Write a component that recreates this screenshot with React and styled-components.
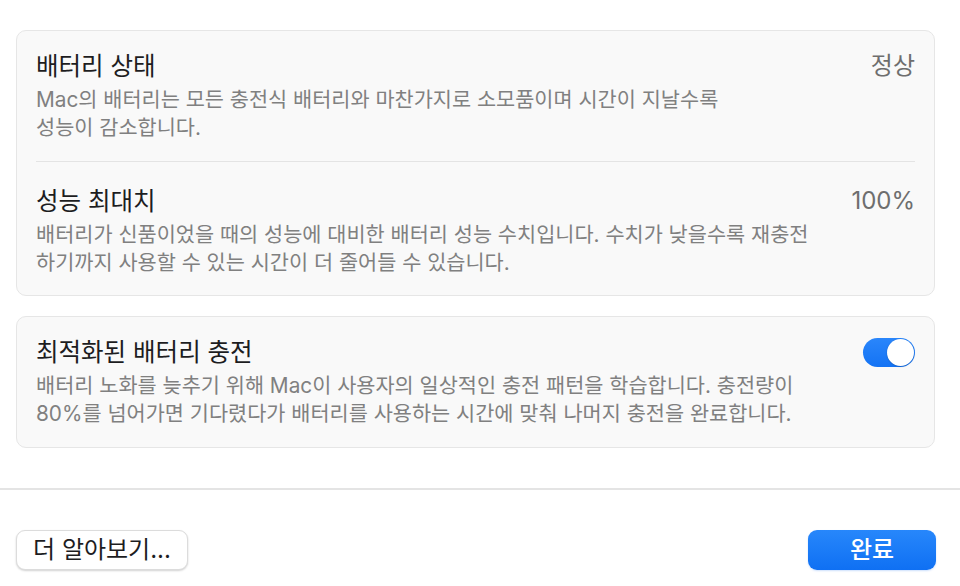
import React from 'react';
import styled, { createGlobalStyle } from 'styled-components';

const GlobalStyle = createGlobalStyle`
  html, body {
    margin: 0;
    padding: 0;
    background: #ffffff;
  }
  body {
    font-family: Inter, "Noto Sans CJK KR", sans-serif;
    -webkit-font-smoothing: antialiased;
  }
`;

const Sheet = styled.div`
  width: 960px;
  height: 586px;
  box-sizing: border-box;
  display: flex;
  flex-direction: column;
  background: #ffffff;
  padding-top: 30px;
`;

const Content = styled.div`
  display: flex;
  flex-direction: column;
  gap: 20px;
  padding: 0 25px 0 16px;
`;

const Card = styled.section`
  background: #f9f9f9;
  border: 1px solid #e6e6e6;
  border-radius: 10px;
  padding: 0 19px;
`;

const Row = styled.div`
  display: flex;
  align-items: flex-start;
  gap: 20px;
  padding: ${(p) => (p.$tight ? '24px 0 18px' : '20px 0 19px')};

  & + & {
    border-top: 1px solid #e4e4e4;
  }
`;

const Text = styled.div`
  flex: 1;
  min-width: 0;
`;

const Title = styled.h3`
  margin: 0 0 5px;
  font-size: 24.5px;
  font-weight: 400;
  line-height: 30px;
  color: #1d1d1f;
`;

const Desc = styled.p`
  margin: 0;
  font-size: 20.8px;
  line-height: 28px;
  color: #808080;
  white-space: nowrap;
`;

const Value = styled.span`
  font-size: 24px;
  line-height: 30px;
  color: #6e6e6e;
  white-space: nowrap;
`;

const Switch = styled.button`
  margin-top: 1px;
  width: 52px;
  height: 29px;
  padding: 0;
  border: none;
  border-radius: 15px;
  background: linear-gradient(180deg, #2a86fb 0%, #1473f4 100%);
  position: relative;
  flex-shrink: 0;

  &::after {
    content: '';
    position: absolute;
    top: 1px;
    right: 1px;
    width: 27px;
    height: 27px;
    border-radius: 50%;
    background: #ffffff;
    box-shadow: 0 0.5px 1.5px rgba(0, 0, 0, 0.25);
  }
`;

const Separator = styled.hr`
  margin: 40px 0 0;
  border: none;
  height: 2px;
  background: #e4e4e4;
`;

const Footer = styled.div`
  display: flex;
  justify-content: space-between;
  align-items: center;
  padding: 40px 24px 0 16px;
`;

const Button = styled.button`
  height: 40px;
  box-sizing: border-box;
  border-radius: 9px;
  font-family: Inter, "Noto Sans CJK KR", sans-serif;
  font-size: 24px;
  line-height: 1;
  padding: 0 12px;
  cursor: pointer;
  border: ${(p) => (p.$primary ? 'none' : '1px solid #dcdcdc')};
  background: ${(p) =>
    p.$primary ? 'linear-gradient(180deg, #2787fb 0%, #0f70f3 100%)' : '#ffffff'};
  color: ${(p) => (p.$primary ? '#ffffff' : '#1d1d1f')};
  font-weight: ${(p) => (p.$primary ? 500 : 400)};
  width: ${(p) => p.$width};
  box-shadow: ${(p) =>
    p.$primary ? '0 1px 2px rgba(0, 100, 240, 0.2)' : '0 1px 2px rgba(0, 0, 0, 0.18)'};
`;

const battery = [
  {
    title: '배터리 상태',
    value: '정상',
    lines: ['Mac의 배터리는 모든 충전식 배터리와 마찬가지로 소모품이며 시간이 지날수록', '성능이 감소합니다.'],
  },
  {
    title: '성능 최대치',
    value: '100%',
    lines: [
      '배터리가 신품이었을 때의 성능에 대비한 배터리 성능 수치입니다. 수치가 낮을수록 재충전',
      '하기까지 사용할 수 있는 시간이 더 줄어들 수 있습니다.',
    ],
  },
];

function Lines({ lines }) {
  return lines.map((line, i) => (
    <React.Fragment key={i}>
      {line}
      {i < lines.length - 1 ? <br /> : null}
    </React.Fragment>
  ));
}

export default function App() {
  return (
    <>
      <GlobalStyle />
      <Sheet>
        <Content>
          <Card>
            {battery.map((item, i) => (
              <Row key={item.title} $tight={i > 0}>
                <Text>
                  <Title>{item.title}</Title>
                  <Desc>
                    <Lines lines={item.lines} />
                  </Desc>
                </Text>
                <Value>{item.value}</Value>
              </Row>
            ))}
          </Card>
          <Card>
            <Row>
              <Text>
                <Title>최적화된 배터리 충전</Title>
                <Desc>
                  <Lines
                    lines={[
                      '배터리 노화를 늦추기 위해 Mac이 사용자의 일상적인 충전 패턴을 학습합니다. 충전량이',
                      '80%를 넘어가면 기다렸다가 배터리를 사용하는 시간에 맞춰 나머지 충전을 완료합니다.',
                    ]}
                  />
                </Desc>
              </Text>
              <Switch aria-label="최적화된 배터리 충전" />
            </Row>
          </Card>
        </Content>
        <Separator />
        <Footer>
          <Button $width="172px">더 알아보기...</Button>
          <Button $primary $width="128px">완료</Button>
        </Footer>
      </Sheet>
    </>
  );
}
